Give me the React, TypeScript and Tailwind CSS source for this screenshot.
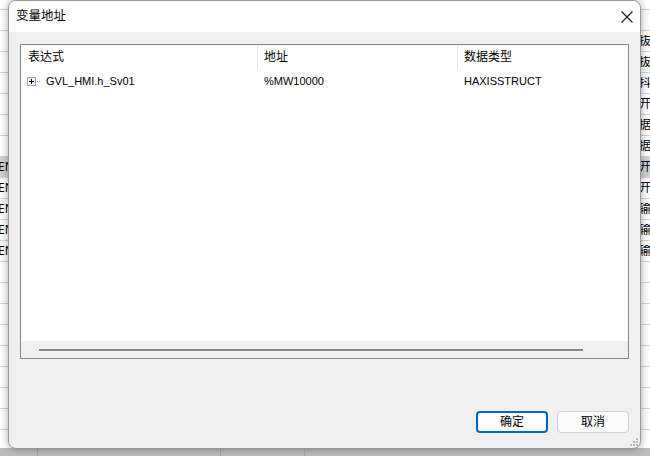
import React from 'react';

const cjk = "font-['Noto_Sans','Noto_Sans_CJK_SC',sans-serif]";

const bgRows = [
  { left: '', right: '' },
  { left: '', right: '抜' },
  { left: '', right: '抜' },
  { left: '', right: '抖' },
  { left: '', right: '开' },
  { left: '', right: '据' },
  { left: '', right: '据' },
  { left: 'EN', right: '开', hi: true },
  { left: 'EN', right: '开' },
  { left: 'EN', right: '输' },
  { left: 'EN', right: '输' },
  { left: 'EN', right: '输' },
  { left: '', right: '' },
  { left: '', right: '' },
  { left: '', right: '' },
  { left: '', right: '' },
  { left: '', right: '' },
  { left: '', right: '' },
  { left: '', right: '' },
  { left: '', right: '' },
  { left: '', right: '' },
  { left: '', right: '' },
];

function CloseIcon() {
  return (
    <svg width="12" height="12" viewBox="0 0 12 12">
      <path d="M0.5 0.5 L11.5 11.5 M11.5 0.5 L0.5 11.5" stroke="#1a1a1a" strokeWidth="1.1" />
    </svg>
  );
}

function PlusBox() {
  return (
    <svg width="16" height="9" viewBox="0 0 16 9">
      <rect x="0.5" y="0.5" width="8" height="8" fill="#f4f4f4" stroke="#a0a0a0" />
      <path d="M2 4.5 H7 M4.5 2 V7" stroke="#000" strokeWidth="1" />
      <path d="M10 4.5 H11 M12 4.5 H13" stroke="#a0a0a0" strokeWidth="1" />
    </svg>
  );
}

function Grip() {
  return (
    <svg width="10" height="10" viewBox="0 0 10 10">
      {[
        [8, 2], [8, 5], [5, 5], [8, 8], [5, 8], [2, 8],
      ].map(([x, y], i) => (
        <rect key={i} x={x} y={y} width="2" height="2" fill="#b5b5b5" />
      ))}
    </svg>
  );
}

export default function App() {
  return (
    <div className={`relative w-[650px] h-[456px] overflow-hidden bg-white ${cjk}`}>
      {/* background application grid */}
      <div className="flex flex-col pt-[9px]">
        {bgRows.map((r, i) => (
          <div
            key={i}
            className={`flex h-[21px] shrink-0 items-center justify-between border-t border-[#d4d4d4] text-[12px] text-black ${r.hi ? 'bg-[#d2d2d2]' : ''}`}
          >
            <div className="w-[8px] overflow-hidden whitespace-nowrap leading-none">
              <span className="-ml-[2px]">{r.left}</span>
            </div>
            <div className="w-[10px] overflow-hidden whitespace-nowrap leading-none">
              <span className="-ml-[1px]">{r.right}</span>
            </div>
          </div>
        ))}
      </div>
      <div className="absolute left-0 bottom-0 flex h-[8px] w-full bg-[#bdbdbd]">
        <div className="w-[38px] border-r border-[#a5a5a5]" />
        <div className="w-[183px] border-r border-[#a5a5a5]" />
        <div className="w-[84px] border-r border-[#a5a5a5]" />
      </div>

      {/* dialog */}
      <div className="absolute left-[8px] top-0 flex h-[449px] w-[633px] flex-col overflow-hidden rounded-[8px] border border-[#9a9a9a] bg-[#f0f0f0] shadow-[0_0_8px_rgba(0,0,0,0.35)]">
        <div className="flex h-[31px] shrink-0 items-center justify-between bg-white pl-[7px] pr-[7px]">
          <span className="text-[12.5px] text-black">变量地址</span>
          <CloseIcon />
        </div>

        <div className="flex flex-1 flex-col px-[11px] pt-[12px]">
          <div className="flex h-[315px] flex-col border border-[#828790] bg-white">
            <div className="flex h-[24px] shrink-0 items-center text-[12px] text-black">
              <div className="flex h-full w-[236px] items-center pl-[7px]">表达式</div>
              <div className="h-full w-px bg-[#e5e5e5]" />
              <div className="flex h-full w-[199px] items-center pl-[6px]">地址</div>
              <div className="h-full w-px bg-[#e5e5e5]" />
              <div className="flex h-full flex-1 items-center pl-[6px]">数据类型</div>
            </div>
            <div className="flex h-[24px] shrink-0 items-center font-['Liberation_Sans',sans-serif] text-[11px] text-black">
              <div className="flex w-[236px] items-center pl-[6px]">
                <PlusBox />
                <span className="ml-[3px]">GVL_HMI.h_Sv01</span>
              </div>
              <div className="w-px" />
              <div className="w-[199px] pl-[6px]">%MW10000</div>
              <div className="w-px" />
              <div className="flex-1 pl-[6px]">HAXISSTRUCT</div>
            </div>
            <div className="flex-1" />
            <div className="flex h-[17px] shrink-0 items-center bg-[#f0f0f0] pl-[18px] pr-[45px]">
              <div className="h-[2px] flex-1 bg-[#858585]" />
            </div>
          </div>

          <div className="flex flex-1 items-end justify-end gap-[9px] pb-[15px]">
            <button className="h-[22px] w-[72px] rounded-[4px] border-2 border-[#0067c0] bg-[#fdfdfd] text-[12px] text-black">
              确定
            </button>
            <button className="h-[22px] w-[72px] rounded-[4px] border border-[#d0d0d0] bg-[#fbfbfb] text-[12px] text-black">
              取消
            </button>
          </div>
        </div>
        <div className="absolute bottom-[2px] right-[2px]">
          <Grip />
        </div>
      </div>
    </div>
  );
}
